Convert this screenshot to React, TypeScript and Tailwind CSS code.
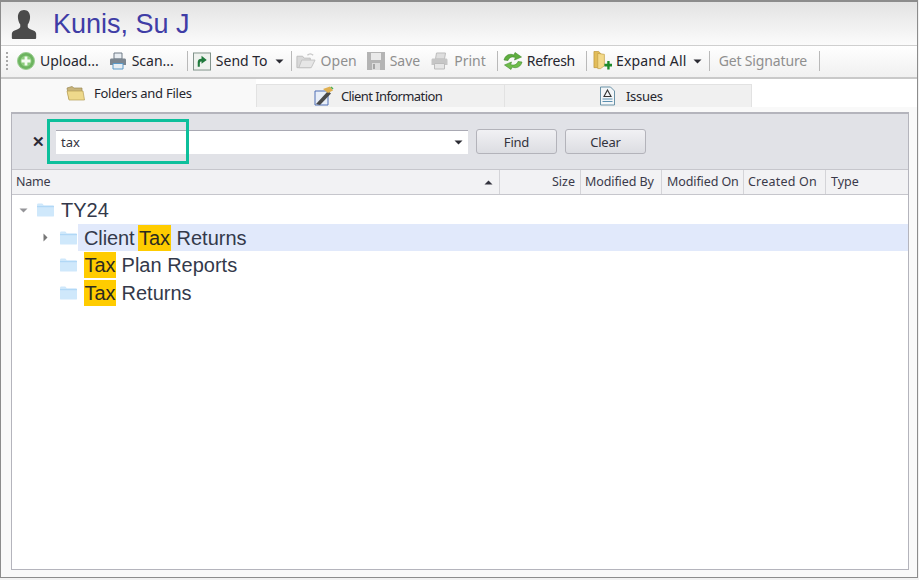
import React from "react";

const Sep = ({ className = "" }: { className?: string }) => (
  <div className={`h-[20px] w-px bg-[#b9b9b9] shrink-0 ${className}`} />
);

const Caret = ({ className = "" }: { className?: string }) => (
  <svg width="9" height="5" viewBox="0 0 9 5" className={`shrink-0 ${className}`}>
    <path d="M0.5 0.5h8L4.5 4.5z" fill="#2b2b33" />
  </svg>
);

const Folder = ({ className = "" }: { className?: string }) => (
  <svg width="17" height="14" viewBox="0 0 18 14" className={`shrink-0 ${className}`}>
    <path d="M0 1.5C0 .7.6 0 1.4 0h4.2l1.6 2H17c.6 0 1 .4 1 1v10c0 .6-.4 1-1 1H1c-.6 0-1-.4-1-1z" fill="#cfe8fb" />
    <path d="M0 3h18v1H0z" fill="#a9d4f5" />
  </svg>
);

const Upload = () => (
  <svg width="18" height="18" viewBox="0 0 18 18" className="shrink-0">
    <circle cx="9" cy="9" r="8.5" fill="#6cb35f" stroke="#9ccf92" />
    <circle cx="9" cy="9" r="5.5" fill="#8ccc7d" />
    <path d="M7.6 4.5h2.8v3.1h3.1v2.8h-3.1v3.1H7.6v-3.1H4.5V7.6h3.1z" fill="#f4fbf1" />
  </svg>
);

const Printer = ({ w = 18, muted = false }: { w?: number; muted?: boolean }) => (
  <svg width={w} height="18" viewBox="0 0 18 18" className="shrink-0">
    <path d={muted ? "M6 1h9l-1 6H5z" : "M5 1h8v6H5z"} fill={muted ? "#dedede" : "#e8edf2"} stroke={muted ? "#bdbdbd" : "#6f7a86"} strokeWidth="1" />
    <path d="M1 8c0-1 .6-1.500 1.500-1.500h13c.9 0 1.500.5 1.500 1.500v5H1z" fill={muted ? "#c6c6c6" : "#7c8690"} />
    <path d="M4 11.500h10V17H4z" fill={muted ? "#e6e6e6" : "#e8eef3"} stroke={muted ? "#bcbcbc" : "#5b9ac9"} strokeWidth="1" />
  </svg>
);

const SendTo = () => (
  <svg width="18" height="19" viewBox="0 0 19 19" className="shrink-0">
    <rect x=".5" y=".5" width="18" height="18" fill="#eef2ee" stroke="#7d8f86" />
    <path d="M5 15V10c0-2.300 1.500-3.500 4-3.500V3.500l5.500 4.500L9 12V9.500c-1.300 0-1.800.6-1.800 2V15z" fill="#1f7a3c" />
  </svg>
);

const OpenIcon = () => (
  <svg width="20" height="18" viewBox="0 0 21 18" className="shrink-0">
    <path d="M1 4h6l1.500 2H15v10H1z" fill="#d9d9d9" stroke="#bdbdbd" />
    <path d="M3 16l3-8h14l-4 8z" fill="#e6e6e6" stroke="#c2c2c2" />
    <path d="M12 3c2-2 4-2 6 0" fill="none" stroke="#c8c8c8" strokeWidth="1.500" />
  </svg>
);

const SaveIcon = () => (
  <svg width="18" height="18" viewBox="0 0 18 18" className="shrink-0">
    <path d="M0 0h18v18H0z" fill="#b4b4b4" />
    <path d="M4 1h10v7H4z" fill="#e9e9e9" />
    <path d="M5 11h8v7H5z" fill="#dcdcdc" />
    <path d="M6 12h2v5H6z" fill="#a5a5a5" />
  </svg>
);

const RefreshIcon = () => (
  <svg width="22" height="20" viewBox="0 0 22 20" className="shrink-0">
    <path d="M2 9c1-4.500 5.500-7 10-5l1-2.500L19.500 6 12.500 9l.8-2.500C10 5 7 6.500 6 9.500z" fill="#5fae3f" stroke="#3f8a2c" strokeWidth=".6" />
    <path d="M20 11c-1 4.500-5.500 7-10 5l-1 2.500L2.500 14l7-3-.8 2.500c3.300 1.500 6.300 0 7.300-3z" fill="#6fbd4b" stroke="#3f8a2c" strokeWidth=".6" />
  </svg>
);

const ExpandIcon = () => (
  <svg width="19" height="22" viewBox="0 0 20 22" className="shrink-0">
    <path d="M1 1h5l2 2v15H1z" fill="#e2bd5a" stroke="#b99335" strokeWidth=".7" />
    <path d="M5 3l7 1v12l-4 3H5z" fill="#f3d98a" stroke="#c09c42" strokeWidth=".7" />
    <path d="M12 14h3v-3h2.500v3H20.500v2.800h-3V20h-2.500v-3.200h-3z" fill="#1d8a2a" />
  </svg>
);

const PersonIcon = () => (
  <svg width="26" height="29" viewBox="0 0 26 31">
    <path d="M13 0c4.200 0 6.500 3 6.500 7.500 0 3-1 6-2.500 8v2.500c0 1.200 1.300 2 4 3 3 1.100 5 2 5 4.500V30c0 .6-.4 1-1 1H1c-.6 0-1-.4-1-1v-4.500c0-2.500 2-3.400 5-4.500 2.700-1 4-1.800 4-3v-2.500c-1.500-2-2.500-5-2.500-8C6.500 3 8.800 0 13 0z" fill="#4a4a4a" />
  </svg>
);

const TabFolder = () => (
  <svg width="19" height="15" viewBox="0 0 19 15" className="shrink-0">
    <path d="M1 2l5-1.500 2 1.500h8v11H3z" fill="#c8b47a" stroke="#9c8a55" strokeWidth=".7" />
    <path d="M1 5h16l1.500 9H3z" fill="#eed98b" stroke="#b69d55" strokeWidth=".7" />
  </svg>
);

const ClientInfoIcon = () => (
  <svg width="20" height="20" viewBox="0 0 20 20" className="shrink-0">
    <path d="M1 5h13v14H1z" fill="#e8eef8" stroke="#4f6fb5" />
    <path d="M2 18L14 5l3 2.500L6 19z" fill="#4a4a4a" />
    <path d="M9 3l7-2.500 3 4-5 2.500z" fill="#e0b050" />
    <path d="M17 1l2 2" stroke="#4caf50" strokeWidth="1.500" />
  </svg>
);

const IssuesIcon = () => (
  <svg width="17" height="20" viewBox="0 0 16 20" className="shrink-0">
    <path d="M1 1h10l4 4v14H1z" fill="#f3f6f8" stroke="#6b93a8" />
    <path d="M8 4l3.500 6.500h-7z" fill="none" stroke="#333" strokeWidth="1.100" />
    <path d="M3 13h10M3 15.500h10" stroke="#5c8fb0" strokeWidth="1.200" />
  </svg>
);

const Hl = ({ children, className = "w-[32px]" }: { children: React.ReactNode; className?: string }) => (
  <span className={`bg-[#ffcc00] text-[#2b2b20] inline-flex items-center justify-center h-[26px] ${className}`}>{children}</span>
);

function ToolText({ children, muted, className = "ml-[5px]" }: { children: React.ReactNode; muted?: boolean; className?: string }) {
  return (
    <span className={`whitespace-nowrap pb-[2px] ${className} ${muted ? "text-[#8f8f8f]" : "text-[#26262e]"}`}>{children}</span>
  );
}

export default function App() {
  return (
    <div className="w-[919px] h-[580px] bg-[#f2f2f2] relative overflow-hidden font-['Noto_Sans','Open_Sans',sans-serif]">
      <div className="w-[918px] h-[578px] border border-t-2 border-[#8c8c8c] flex flex-col bg-[#f7f7f7]">
        {/* Title */}
        <div className="h-[44px] shrink-0 flex items-center pt-[2px] pl-[10px] bg-gradient-to-b from-[#e3e3e3] to-[#fbfbfb] border-b border-[#cfcfcf]">
          <PersonIcon />
          <span className="ml-[16px] text-[27px] leading-none text-[#3f3da6] font-['Liberation_Sans',sans-serif]">Kunis, Su J</span>
        </div>
        {/* Toolbar */}
        <div className="h-[33px] shrink-0 flex items-center pb-[1px] bg-gradient-to-b from-[#ffffff] to-[#f0f0f0] border-b-2 border-[#c9c9c9] text-[14px]">
          <div className="ml-[5px] mr-[9px] flex flex-col gap-[2px] w-[2px]">
            <div className="w-[2px] h-[2px] bg-[#a8a8a8]" />
            <div className="w-[2px] h-[2px] bg-[#a8a8a8]" />
            <div className="w-[2px] h-[2px] bg-[#a8a8a8]" />
            <div className="w-[2px] h-[2px] bg-[#a8a8a8]" />
            <div className="w-[2px] h-[2px] bg-[#a8a8a8]" />
          </div>
          <Upload />
          <ToolText>Upload...</ToolText>
          <div className="ml-[10px] flex items-center"><Printer /><ToolText>Scan...</ToolText></div>
          <Sep className="ml-[13px]" />
          <div className="ml-[5px] flex items-center"><SendTo /><ToolText>Send To</ToolText><Caret className="ml-[7px]" /></div>
          <Sep className="ml-[7px]" />
          <div className="ml-[4px] flex items-center"><OpenIcon /><ToolText muted>Open</ToolText></div>
          <div className="ml-[10px] flex items-center"><SaveIcon /><ToolText muted>Save</ToolText></div>
          <div className="ml-[10px] flex items-center"><Printer w={19} muted /><ToolText muted>Print</ToolText></div>
          <Sep className="ml-[11px]" />
          <div className="ml-[4px] flex items-center"><RefreshIcon /><ToolText className="ml-[3px] tracking-[-0.3px]">Refresh</ToolText></div>
          <Sep className="ml-[11px]" />
          <div className="ml-[6px] flex items-center"><ExpandIcon /><ToolText className="ml-[4px] tracking-[0.2px]">Expand All</ToolText><Caret className="ml-[6px]" /></div>
          <Sep className="ml-[7px]" />
          <ToolText muted className="ml-[9px] tracking-[-0.15px]">Get Signature</ToolText>
          <Sep className="ml-[12px]" />
        </div>
        {/* Tabs */}
        <div className="h-[28px] shrink-0 flex items-end bg-white text-[13px] text-[#26262e]">
          <div className="w-[255px] h-[28px] bg-[#f9f9f9] flex items-center pl-[65px] tracking-[-0.25px]">
            <TabFolder /><span className="ml-[9px] pt-[2px]">Folders and Files</span>
          </div>
          <div className="w-[248px] h-[23px] bg-[#f0f0f0] border-l border-t border-[#e2e2e2] flex items-center pl-[57px] tracking-[-0.6px]">
            <ClientInfoIcon /><span className="ml-[7px] pt-[2px]">Client Information</span>
          </div>
          <div className="w-[248px] h-[23px] bg-[#f0f0f0] border-l border-r border-t border-[#e2e2e2] flex items-center pl-[94px]">
            <IssuesIcon /><span className="ml-[10px] pt-[2px] tracking-[-0.3px]">Issues</span>
          </div>
        </div>
        {/* Content */}
        <div className="flex-1 pl-[10px] pr-[8px] pt-[5px] pb-[7px] min-h-0 flex bg-[#f9f9f9]">
          <div className="flex-1 border border-[#b4b4bc] border-t-2 bg-white flex flex-col">
            {/* Search */}
            <div className="h-[56px] shrink-0 bg-[#e1e2e7] border-b border-[#c6c6cc] flex items-center">
              <span className="ml-[20px] w-[12px] text-center text-[15px] leading-none font-bold text-[#2a2a34] font-['Liberation_Sans',sans-serif]">✕</span>
              <div className="ml-[12px] w-[412px] h-[24px] bg-white border-t border-[#a9a9b3] flex items-center justify-between pl-[5px] pr-[5px] text-[13px] text-[#33333d]">
                <span className="pt-[2px]">tax</span>
                <Caret />
              </div>
              <button className="ml-[8px] w-[81px] h-[25px] pt-[2px] rounded-[3px] border border-[#b3b3ba] bg-gradient-to-b from-[#f1f1f4] to-[#dcdde2] text-[13px] tracking-[-0.2px] text-[#33333d]">Find</button>
              <button className="ml-[8px] w-[81px] h-[25px] pt-[2px] rounded-[3px] border border-[#b3b3ba] bg-gradient-to-b from-[#f1f1f4] to-[#dcdde2] text-[13px] tracking-[-0.2px] text-[#33333d]">Clear</button>
            </div>
            {/* Column headers */}
            <div className="h-[25px] shrink-0 flex items-center bg-[#f2f2f4] border-b border-[#c6c6cc] text-[12.5px] text-[#3a3a4a]">
              <div className="w-[488px] h-full flex items-center justify-between pt-[1px] pl-[4px] pr-[6px] border-r border-[#d4d4d8] tracking-[-0.2px]">
                <span>Name</span>
                <svg width="9" height="5" viewBox="0 0 9 5"><path d="M.5 4.500h8L4.500.5z" fill="#33333d" /></svg>
              </div>
              <div className="w-[81px] h-full flex items-center justify-end pt-[1px] pr-[5px] border-r border-[#d4d4d8]">Size</div>
              <div className="w-[81px] h-full flex items-center pt-[1px] pl-[4px] border-r border-[#d4d4d8] whitespace-nowrap tracking-[-0.1px]">Modified By</div>
              <div className="w-[82px] h-full flex items-center pt-[1px] pl-[5px] border-r border-[#d4d4d8] whitespace-nowrap tracking-[-0.1px]">Modified On</div>
              <div className="w-[82px] h-full flex items-center pt-[1px] pl-[4px] border-r border-[#d4d4d8] whitespace-nowrap tracking-[0.2px]">Created On</div>
              <div className="flex-1 h-full flex items-center pt-[1px] pl-[5px]">Type</div>
            </div>
            {/* Tree */}
            <div className="flex-1 pt-[1px] text-[20px] text-[#33394a] font-['Liberation_Sans',sans-serif] leading-none">
              <div className="h-[28px] flex items-center pl-[7px]">
                <Caret className="opacity-50" />
                <Folder className="ml-[9px]" />
                <span className="ml-[7px]">TY24</span>
              </div>
              <div className="h-[27px] flex items-center pl-[31px]">
                <svg width="5" height="9" viewBox="0 0 5 9" className="shrink-0"><path d="M.5.5v8l4-4z" fill="#777" /></svg>
                <Folder className="ml-[12px]" />
                <div className="ml-[1px] flex-1 h-full bg-[#e1e9fb] flex items-center pl-[6px] whitespace-pre">
                  <span className="w-[54px] tracking-[-0.1px]">Client </span><Hl className="w-[33px]">Tax</Hl><span> Returns</span>
                </div>
              </div>
              <div className="h-[28px] flex items-center pl-[48px] whitespace-pre">
                <Folder />
                <span className="ml-[7px]"><Hl>Tax</Hl></span><span> Plan Reports</span>
              </div>
              <div className="h-[27px] flex items-center pl-[48px] whitespace-pre">
                <Folder />
                <span className="ml-[7px]"><Hl>Tax</Hl></span><span> Returns</span>
              </div>
            </div>
          </div>
        </div>
      </div>
      {/* Annotation overlay */}
      <div className="absolute left-[47px] top-[119px] w-[142px] h-[45px] border-[3px] border-[#0dbf9b]" />
    </div>
  );
}
